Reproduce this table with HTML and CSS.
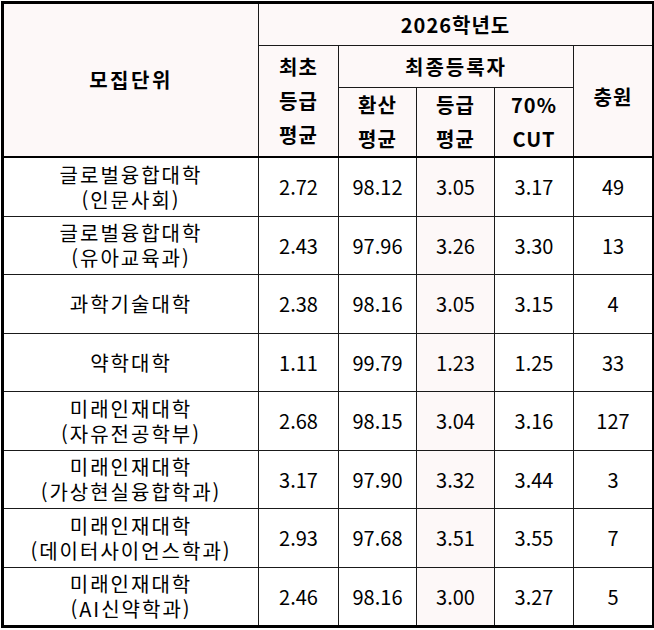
FILE: index.html
```html
<!DOCTYPE html>
<html lang="ko">
<head>
<meta charset="utf-8">
<title>2026학년도 모집단위</title>
<link rel="stylesheet" href="styles.css">
</head>
<body>
<table class="grade-table">
  <colgroup>
    <col class="c-unit">
    <col class="c-first">
    <col class="c-conv">
    <col class="c-grade">
    <col class="c-cut">
    <col class="c-quota">
  </colgroup>
  <thead>
    <tr class="h1">
      <th rowspan="3" class="unit-h">모집단위</th>
      <th colspan="5" class="year">2026학년도</th>
    </tr>
    <tr class="h2">
      <th rowspan="2" class="tall"><span class="ln">최초</span><span class="ln">등급</span><span class="ln">평균</span></th>
      <th colspan="3" class="wide">최종등록자</th>
      <th rowspan="2" class="quota-h">충원</th>
    </tr>
    <tr class="h3">
      <th class="tall"><span class="ln">환산</span><span class="ln">평균</span></th>
      <th class="tall"><span class="ln">등급</span><span class="ln">평균</span></th>
      <th class="tall"><span class="ln">70%</span><span class="ln">CUT</span></th>
    </tr>
  </thead>
  <tbody>
    <tr><td class="unit"><span class="ln">글로벌융합대학</span><span class="ln">(인문사회)</span></td><td>2.72</td><td>98.12</td><td class="pink">3.05</td><td>3.17</td><td>49</td></tr>
    <tr><td class="unit"><span class="ln">글로벌융합대학</span><span class="ln">(유아교육과)</span></td><td>2.43</td><td>97.96</td><td class="pink">3.26</td><td>3.30</td><td>13</td></tr>
    <tr><td class="unit">과학기술대학</td><td>2.38</td><td>98.16</td><td class="pink">3.05</td><td>3.15</td><td>4</td></tr>
    <tr><td class="unit">약학대학</td><td>1.11</td><td>99.79</td><td class="pink">1.23</td><td>1.25</td><td>33</td></tr>
    <tr><td class="unit"><span class="ln">미래인재대학</span><span class="ln">(자유전공학부)</span></td><td>2.68</td><td>98.15</td><td class="pink">3.04</td><td>3.16</td><td>127</td></tr>
    <tr><td class="unit"><span class="ln">미래인재대학</span><span class="ln">(가상현실융합학과)</span></td><td>3.17</td><td>97.90</td><td class="pink">3.32</td><td>3.44</td><td>3</td></tr>
    <tr><td class="unit"><span class="ln">미래인재대학</span><span class="ln">(데이터사이언스학과)</span></td><td>2.93</td><td>97.68</td><td class="pink">3.51</td><td>3.55</td><td>7</td></tr>
    <tr><td class="unit"><span class="ln">미래인재대학</span><span class="ln">(AI신약학과)</span></td><td>2.46</td><td>98.16</td><td class="pink">3.00</td><td>3.27</td><td>5</td></tr>
  </tbody>
</table>
</body>
</html>
```

FILE: styles.css
```css
html, body {
  margin: 0;
  padding: 0;
  background: #ffffff;
}

body {
  padding: 1px;
  font-family: "Noto Sans CJK KR", "Noto Sans", sans-serif;
  color: #000;
}

.grade-table {
  border-collapse: collapse;
  table-layout: fixed;
  width: 651px;
  border: 3px solid #000;
}

.c-unit { width: 256px; }
.c-first { width: 80px; }
.c-conv { width: 78px; }
.c-grade { width: 78px; }
.c-cut { width: 79px; }
.c-quota { width: 80px; }

th, td {
  border: 1px solid #1a1a1a;
  padding: 0;
  text-align: center;
  vertical-align: middle;
  font-size: 20px;
}

.ln {
  display: block;
}

th {
  background: #fdf8f8;
  font-weight: 700;
  line-height: 34px;
  letter-spacing: 1px;
}

th.unit-h {
  letter-spacing: 2.5px;
}

th.year {
  letter-spacing: 1px;
}

th.wide {
  letter-spacing: 2px;
}

thead tr:last-child th,
.grade-table thead .h2 th[rowspan],
.grade-table thead .h1 th[rowspan] {
  border-bottom: 2px solid #000;
}

.h1 { height: 43px; }
.h2 { height: 42px; }
.h3 { height: 69px; }

.quota-h {
  padding-bottom: 8px;
}

td {
  font-weight: 400;
  line-height: 25px;
  height: 57.5px;
  background: #fff;
}

td.pink {
  background: #fdf8f8;
}

td.unit {
  letter-spacing: 2px;
}
```
